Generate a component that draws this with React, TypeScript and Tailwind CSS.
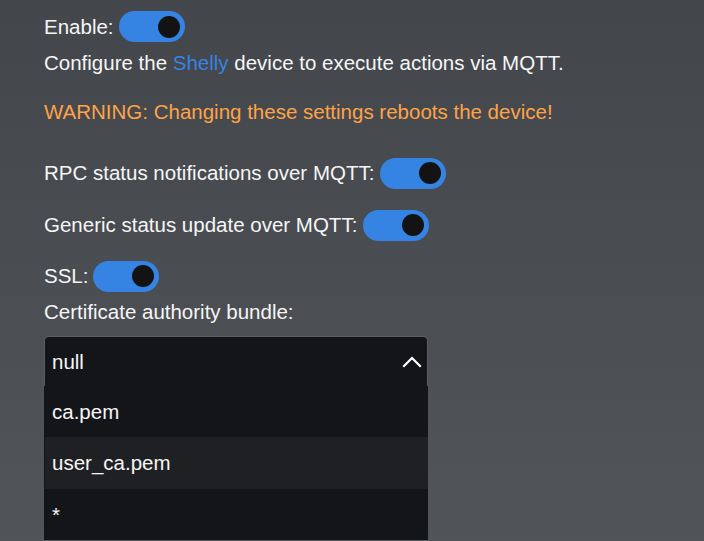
import React, { useState } from 'react';

const Toggle = ({ on = true }: { on?: boolean }) => (
  <button
    type="button"
    aria-pressed={on}
    className="relative flex h-[31px] w-[66px] shrink-0 items-center rounded-full bg-[#3584e4] px-[5px]"
  >
    <span
      className={
        on
          ? 'ml-auto block h-[22px] w-[22px] rounded-full bg-[#131313]'
          : 'block h-[22px] w-[22px] rounded-full bg-[#131313]'
      }
    />
  </button>
);

const options = ['ca.pem', 'user_ca.pem', '*'];

export default function App() {
  const [hovered] = useState('user_ca.pem');

  return (
    <div
      className="h-[541px] w-[704px] overflow-hidden bg-gradient-to-b from-[#43464b] to-[#515459] pl-[44px] text-[20.5px] leading-[24px] text-[#f6f6f6]"
      style={{ fontFamily: '"Liberation Sans", Arial, sans-serif' }}
    >
      <div className="flex flex-col">
        <div className="mt-[11px] flex h-[31px] items-center gap-[5px]">
          <span>Enable:</span>
          <Toggle />
        </div>
        <p className="mt-[9px]">
          Configure the <span className="text-[#3584e4]">Shelly</span> device to execute actions via MQTT.
        </p>
        <p className="mt-[25px] text-[#ffa348]">WARNING: Changing these settings reboots the device!</p>

        <div className="mt-[33px] flex h-[32px] items-center gap-[6px]">
          <span>RPC status notifications over MQTT:</span>
          <Toggle />
        </div>
        <div className="mt-[20px] flex h-[32px] items-center gap-[6px]">
          <span>Generic status update over MQTT:</span>
          <Toggle />
        </div>
        <div className="mt-[19px] flex h-[32px] items-center gap-[5px]">
          <span>SSL:</span>
          <Toggle />
        </div>
        <p className="mt-[8px]">Certificate authority bundle:</p>

        <div className="relative mt-[12px] w-[384px]">
          <div className="flex h-[50px] items-center justify-between rounded-t-[5px] border border-b-0 border-[#5c5e63] bg-[#141518] pl-[7px] pr-[5px]">
            <span>null</span>
            <svg width="20" height="14" viewBox="0 0 20 14" fill="none">
              <path d="M2 11 L10 3 L18 11" stroke="#ffffff" strokeWidth="2.2" strokeLinecap="square" />
            </svg>
          </div>
          <ul className="bg-[#141518]">
            {options.map((o) => (
              <li
                key={o}
                className={
                  o === hovered
                    ? 'ml-[1px] flex h-[52px] items-center bg-[#1f2023] pl-[7px]'
                    : 'flex h-[51px] items-center pl-[8px]'
                }
              >
                {o}
              </li>
            ))}
          </ul>
        </div>
      </div>
    </div>
  );
}
